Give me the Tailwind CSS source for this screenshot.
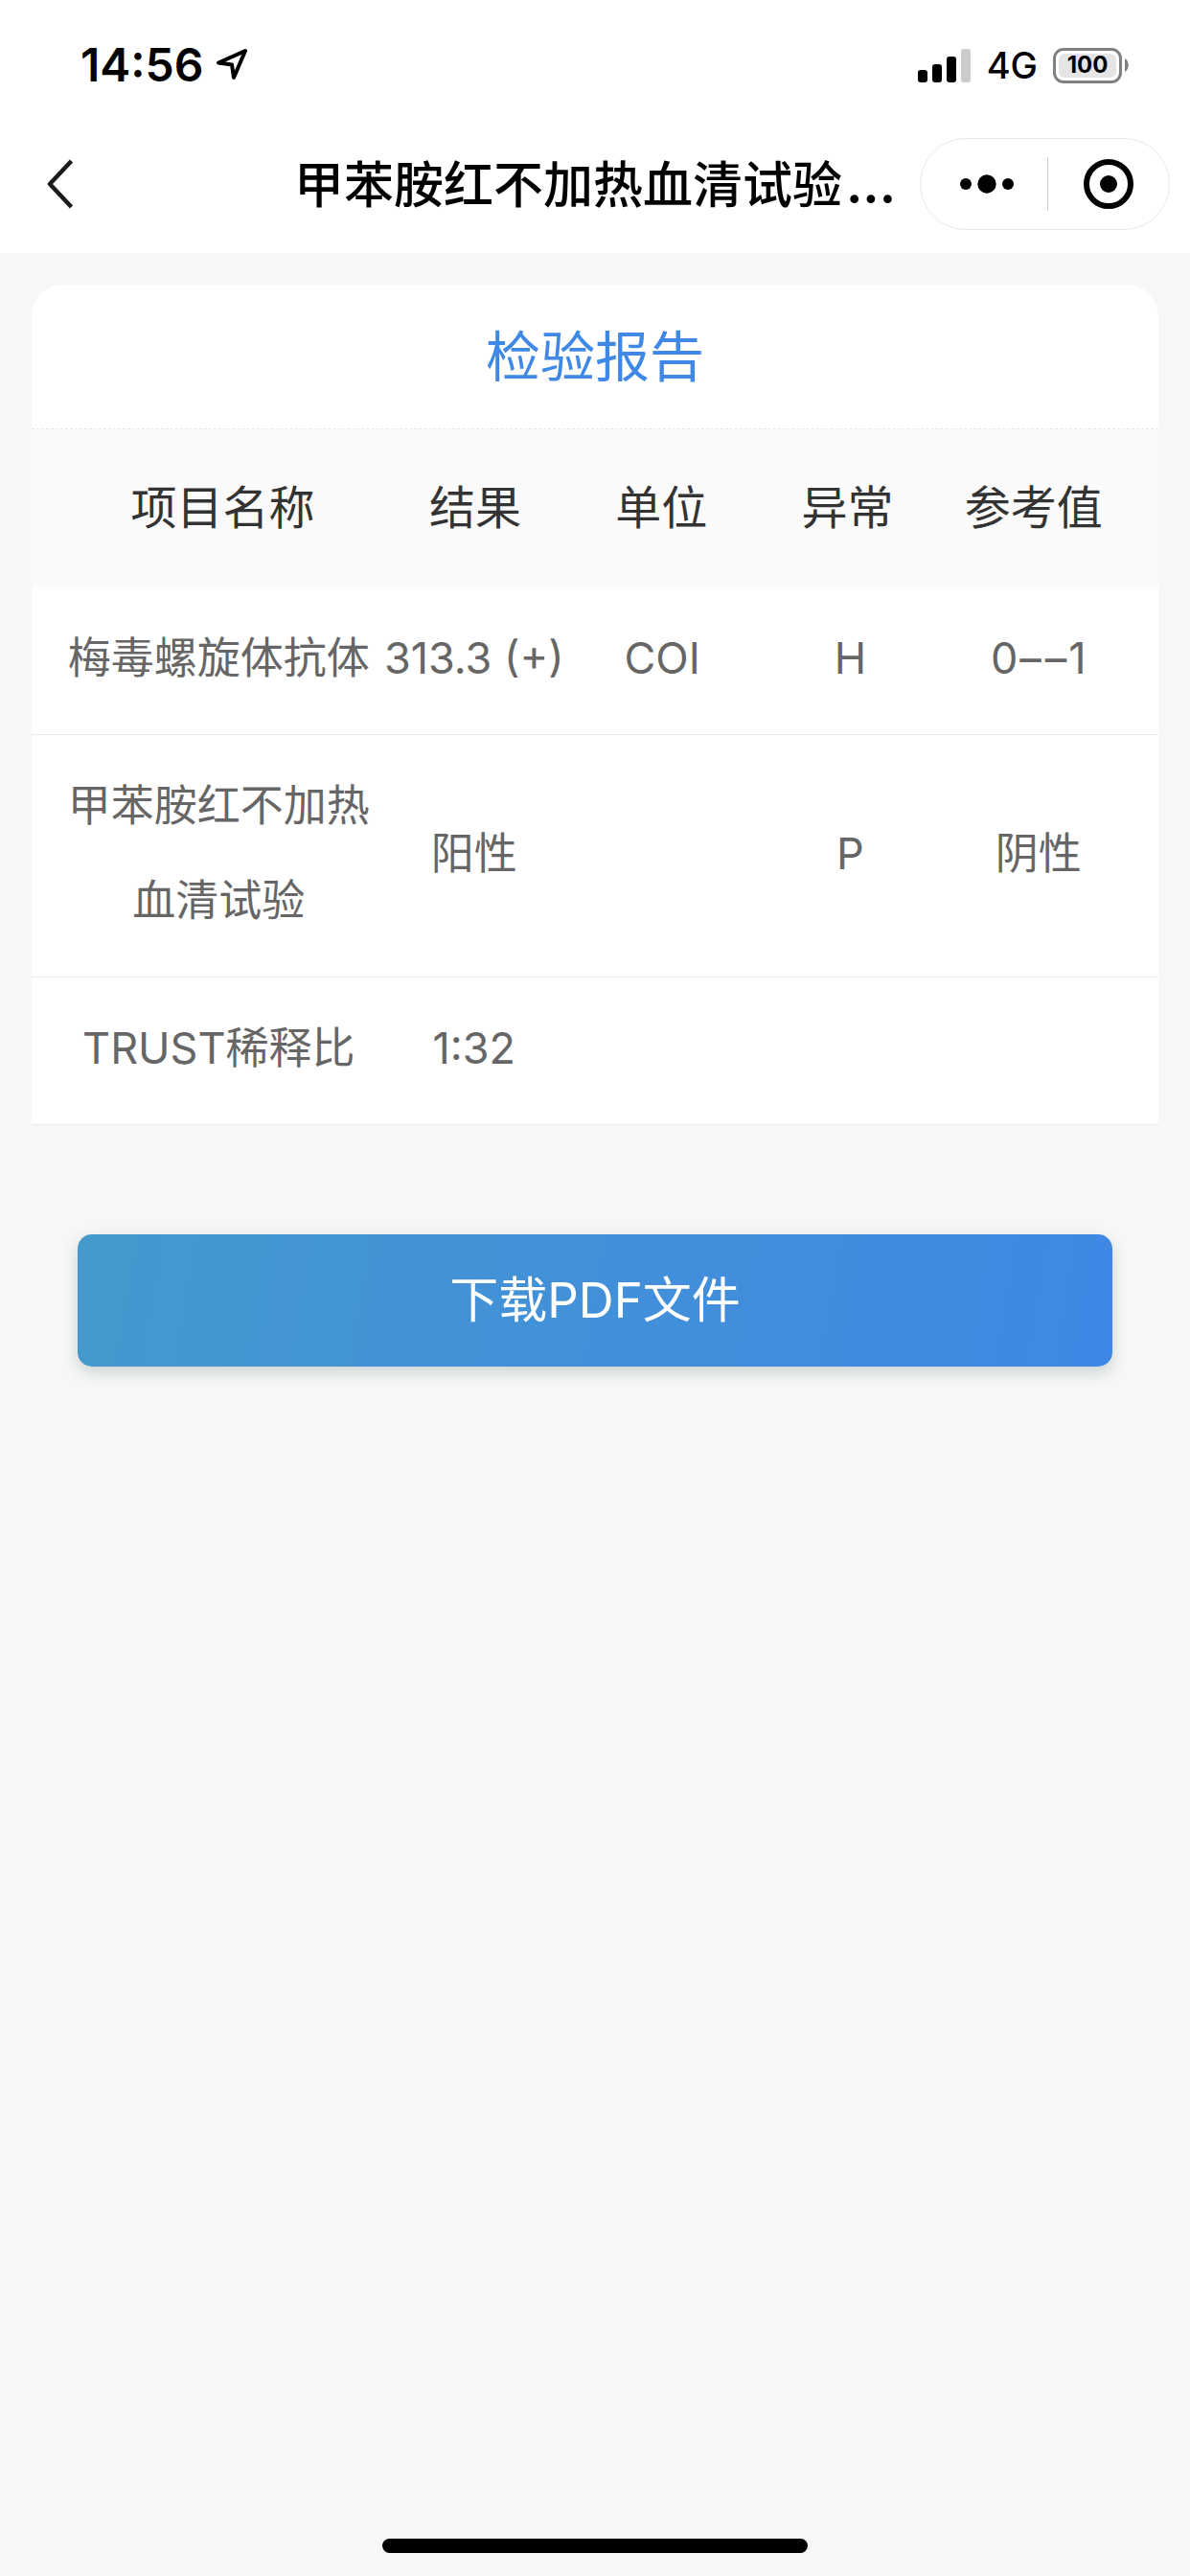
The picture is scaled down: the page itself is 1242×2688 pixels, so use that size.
<!DOCTYPE html>
<html lang="zh-CN">
<head>
<meta charset="utf-8">
<meta name="viewport" content="width=device-width, initial-scale=1">
<title>甲苯胺红不加热血清试验</title>
<script src="https://cdn.jsdelivr.net/npm/@tailwindcss/browser@4"></script>
</head>
<body class="flex min-h-screen flex-col bg-[#f7f7f7] font-['Inter','Noto_Sans_CJK_SC',sans-serif]">
  <header class="bg-white text-black">
    <!-- Status bar -->
    <div class="flex h-[136px] items-center justify-between pr-16 pl-[84px]">
      <div class="flex items-center gap-3">
        <span class="text-[48px] leading-none font-semibold">14:56</span>
        <svg class="size-9" viewBox="0 0 36 36" fill="none" stroke="#000" stroke-width="4" stroke-linejoin="round" aria-hidden="true"><path d="M32 3 4 15.500 18 17.500 20 31Z"/></svg>
      </div>
      <div class="flex items-center">
        <svg class="h-9 w-14" viewBox="0 0 56 36" aria-hidden="true">
          <rect x="0" y="23" width="10" height="13" rx="3"/>
          <rect x="15" y="17" width="10" height="19" rx="3"/>
          <rect x="30" y="9" width="10" height="27" rx="3"/>
          <rect x="45" y="1" width="10" height="35" rx="3" fill="#ccc"/>
        </svg>
        <span class="ml-4 text-[38px] leading-none font-medium">4G</span>
        <div class="ml-4 flex items-center gap-[3px]">
          <div class="rounded-[11px] border-3 border-[#808080] p-[3px]">
            <div class="flex h-[25px] w-[60px] items-center justify-center rounded-[6px] bg-[#e5e5e5] text-[24px] leading-none font-bold">100</div>
          </div>
          <svg class="h-[14px] w-1" viewBox="0 0 4 14" aria-hidden="true"><path d="M0 0C5 3 5 11 0 14Z" fill="#808080"/></svg>
        </div>
      </div>
    </div>
    <!-- Navigation bar -->
    <div class="grid h-32 grid-cols-[1fr_auto_1fr] items-center pr-[21px] pb-4 pl-[33px]">
      <button type="button" aria-label="返回" class="flex size-[60px] items-center justify-center">
        <svg class="h-[52px] w-7" viewBox="0 0 28 52" fill="none" stroke="#1a1a1a" stroke-width="4.500" stroke-linejoin="round" aria-hidden="true"><path d="M25.500 2 3 26 25.500 50"/></svg>
      </button>
      <h1 class="pt-1 pr-3 text-[52px] leading-none font-medium">甲苯胺红不加热血清试验<span class="ml-1 font-bold">...</span></h1>
      <div class="flex h-24 w-[261px] items-center justify-self-end rounded-full border border-[#e8e8e8]">
        <button type="button" aria-label="更多" class="flex h-full flex-1 items-center justify-center pl-1.5">
          <svg class="h-5 w-14" viewBox="0 0 56 20" aria-hidden="true"><circle cx="6" cy="10" r="6"/><circle cx="28" cy="10" r="9.700"/><circle cx="50" cy="10" r="6"/></svg>
        </button>
        <span class="h-14 w-px bg-[#ccc]"></span>
        <button type="button" aria-label="关闭" class="flex h-full flex-1 items-center justify-center">
          <svg class="size-[52px]" viewBox="0 0 52 52" aria-hidden="true"><circle cx="26" cy="26" r="23" fill="none" stroke="#000" stroke-width="6"/><circle cx="26" cy="26" r="9"/></svg>
        </button>
      </div>
    </div>
  </header>

  <main class="flex-1 p-[33px]">
    <section class="rounded-t-[33px] bg-white">
      <h2 class="border-b border-dashed border-[#e8e8e8] pt-0.5 text-center text-[57px] leading-[148px] text-[#3f88e5]">检验报告</h2>
      <table class="block w-full text-center leading-[99px]">
        <thead class="block bg-[#fafafa] text-[48px] text-[#333]">
          <tr class="grid grid-cols-[12fr_7fr_7fr_7fr_7fr] px-[33px] pt-8 pb-[34px]">
            <th scope="col" class="font-normal">项目名称</th>
            <th scope="col" class="font-normal">结果</th>
            <th scope="col" class="font-normal">单位</th>
            <th scope="col" class="font-normal">异常</th>
            <th scope="col" class="font-normal">参考值</th>
          </tr>
        </thead>
        <tbody class="block text-[45px] text-[#666]">
          <tr class="grid grid-cols-[12fr_7fr_7fr_7fr_7fr] items-center border-b border-[#ececec] px-[27px] pt-6 pb-[30px]">
            <td>梅毒螺旋体抗体</td><td>313.3 (+)</td><td>COI</td><td>H</td><td>0<span class="mx-0.5">–</span><span class="mx-0.5">–</span>1</td>
          </tr>
          <tr class="grid grid-cols-[12fr_7fr_7fr_7fr_7fr] items-center border-b border-[#ececec] px-[27px] pt-6 pb-[30px]">
            <td>甲苯胺红不加热血清试验</td><td>阳性</td><td></td><td>P</td><td>阴性</td>
          </tr>
          <tr class="grid grid-cols-[12fr_7fr_7fr_7fr_7fr] items-center border-b border-[#ececec] px-[27px] pt-6 pb-[30px]">
            <td>TRUST稀释比</td><td>1:32</td><td></td><td></td><td></td>
          </tr>
        </tbody>
      </table>
    </section>
    <div class="px-12 pt-[114px]">
      <button type="button" class="h-[138px] w-full rounded-[15px] bg-linear-[100deg,#4599cd,#3f87e5] text-[51px] text-white shadow-[0_6px_16px_rgba(26,70,60,0.2)]">下载PDF文件</button>
    </div>
  </main>

  <footer class="flex justify-center pb-6">
    <div class="h-[15px] w-[444px] rounded-full bg-black"></div>
  </footer>
</body>
</html>
